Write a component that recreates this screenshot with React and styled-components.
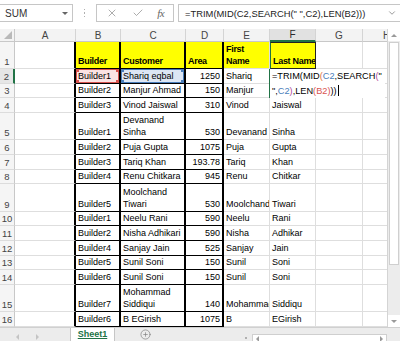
import React from "react";
import styled, { createGlobalStyle } from "styled-components";
import { X, Check, ChevronDown, CirclePlus } from "lucide-react";

const GlobalStyle = createGlobalStyle`
  html, body { margin: 0; padding: 0; background: #fff; }
  body { font-family: "Liberation Sans", Arial, sans-serif; overflow: hidden; }
`;

const SINGLE = 14.6;
const DOUBLE = 27.6;
const GREEN = "#217346";

const DATA = [
  { n: 2, b: "Builder1", c: "Shariq eqbal", d: "1250", e: "Shariq", f: "", edit: true },
  { n: 3, b: "Builder2", c: "Manjur Ahmad", d: "150", e: "Manjur", f: "" },
  { n: 4, b: "Builder3", c: "Vinod Jaiswal", d: "310", e: "Vinod", f: "Jaiswal" },
  { n: 5, b: "Builder1", c: "Devanand Sinha", d: "530", e: "Devanand", f: "Sinha", tall: true },
  { n: 6, b: "Builder2", c: "Puja Gupta", d: "1075", e: "Puja", f: "Gupta" },
  { n: 7, b: "Builder3", c: "Tariq Khan", d: "193.78", e: "Tariq", f: "Khan" },
  { n: 8, b: "Builder4", c: "Renu Chitkara", d: "945", e: "Renu", f: "Chitkar" },
  { n: 9, b: "Builder5", c: "Moolchand Tiwari", d: "530", e: "Moolchand", f: "Tiwari", tall: true },
  { n: 10, b: "Builder1", c: "Neelu Rani", d: "590", e: "Neelu", f: "Rani" },
  { n: 11, b: "Builder2", c: "Nisha Adhikari", d: "590", e: "Nisha", f: "Adhikar" },
  { n: 12, b: "Builder4", c: "Sanjay Jain", d: "525", e: "Sanjay", f: "Jain" },
  { n: 13, b: "Builder5", c: "Sunil Soni", d: "150", e: "Sunil", f: "Soni" },
  { n: 14, b: "Builder6", c: "Sunil Soni", d: "150", e: "Sunil", f: "Soni" },
  { n: 15, b: "Builder7", c: "Mohammad Siddiqui", d: "140", e: "Mohammad", f: "Siddiqu", tall: true },
  { n: 16, b: "Builder6", c: "B EGirish", d: "1075", e: "B", f: "EGirish" },
];

const ROW_SIZES = ["13px", "27px", ...DATA.map((r) => (r.tall ? DOUBLE : SINGLE) + "px")].join(" ");

/* ---------- formula bar ---------- */

const FormulaBar = styled.div`
  height: 29px;
  display: flex;
  align-items: flex-start;
  padding-top: 4px;
  box-sizing: border-box;
  background: #fff;
`;

const NameBox = styled.div`
  width: 73px;
  height: 18px;
  box-sizing: border-box;
  border: 1px solid #c6c6c6;
  border-left: none;
  display: flex;
  align-items: center;
  justify-content: space-between;
  padding: 0 4px 0 5px;
  font-size: 10px;
  color: #333;
`;

const SmallTri = styled.span`
  width: 0;
  height: 0;
  border-left: 3px solid transparent;
  border-right: 3px solid transparent;
  border-top: 3px solid #666;
`;

const Grip = styled.div`
  width: 23px;
  height: 18px;
  display: flex;
  flex-direction: column;
  align-items: center;
  justify-content: center;
  gap: 2px;
  span {
    width: 1.5px;
    height: 1.5px;
    background: #b0b0b0;
  }
`;

const ButtonBox = styled.div`
  width: 78px;
  height: 18px;
  box-sizing: border-box;
  border: 1px solid #c6c6c6;
  display: flex;
  align-items: center;
  justify-content: space-around;
  color: #8a8a8a;
  padding: 0 2px;
`;

const Fx = styled.span`
  font-family: "Liberation Serif", "Times New Roman", serif;
  font-style: italic;
  font-size: 11px;
  color: #666;
  letter-spacing: -0.5px;
`;

const FormulaInput = styled.div`
  flex: 1;
  height: 18px;
  margin-left: 4px;
  box-sizing: border-box;
  border: 1px solid #c6c6c6;
  border-right: none;
  display: flex;
  align-items: center;
  justify-content: space-between;
  padding: 0 3px 0 6px;
  font-size: 9.4px;
  color: #222;
  white-space: nowrap;
`;

/* ---------- sheet ---------- */

const Main = styled.div`
  display: flex;
  height: 298px;
`;

const Grid = styled.div`
  flex: 1;
  min-width: 0;
  overflow: hidden;
  display: grid;
  grid-template-columns: 15px 61px 45px 65px 38px 46px 46px 47px 48px;
  grid-template-rows: ${(p) => p.$rows};
  background: #fff;
`;

const Corner = styled.div`
  background: #f3f3f3;
  border-right: 1px solid #c8c8c8;
  border-bottom: 1px solid #c8c8c8;
  box-sizing: border-box;
  display: flex;
  align-items: flex-end;
  justify-content: flex-end;
  padding: 0 2px 2px 0;
`;

const HeadCell = styled.div`
  box-sizing: border-box;
  display: flex;
  align-items: center;
  justify-content: center;
  background: ${(p) => (p.$active ? "#e1e1e1" : "#f3f3f3")};
  border-right: 1px solid #d4d4d4;
  border-bottom: ${(p) => (p.$active ? `2px solid ${GREEN}` : "1px solid #c8c8c8")};
  font-size: 10px;
  color: ${(p) => (p.$active ? "#2a2a2a" : "#444")};
`;

const RowHead = styled.div`
  box-sizing: border-box;
  display: flex;
  align-items: flex-end;
  justify-content: center;
  padding-bottom: 1px;
  background: ${(p) => (p.$active ? "#e6e6e6" : "#f5f5f5")};
  border-right: ${(p) => (p.$active ? `2px solid ${GREEN}` : "1px solid #c8c8c8")};
  border-bottom: 1px solid #dcdcdc;
  font-size: 9.5px;
  line-height: 11px;
  color: #444;
`;

const Cell = styled.div`
  box-sizing: border-box;
  position: relative;
  z-index: ${(p) => (p.$open ? 5 : "auto")};
  display: flex;
  align-items: flex-end;
  justify-content: ${(p) => (p.$num ? "flex-end" : "flex-start")};
  padding: 0 2px 1px 2px;
  overflow: ${(p) => (p.$open ? "visible" : "hidden")};
  white-space: ${(p) => (p.$wrap ? "normal" : "nowrap")};
  font-size: 9px;
  line-height: 12px;
  color: #000;
  font-weight: ${(p) => (p.$bold ? 700 : 400)};
  letter-spacing: ${(p) => (p.$bold ? "-0.3px" : "normal")};
  background: ${(p) => p.$bg || "#fff"};
  border-right: ${(p) => (p.$edge ? "2px solid #000" : "1px solid #dedede")};
  border-bottom: 1px solid ${(p) => (p.$line ? "#000" : "#dedede")};
  ${(p) => p.$boxed && `border: 1px solid #222; border-left: 1px solid ${GREEN};`}
`;

const RefBox = styled.div`
  position: absolute;
  inset: 0 0 0 0;
  border: 1px solid ${(p) => p.$color};
  pointer-events: none;
`;

const Handle = styled.span`
  position: absolute;
  width: 3px;
  height: 3px;
  background: ${(p) => p.$color};
  ${(p) => (p.$top ? "top: -1px;" : "bottom: -1px;")}
  ${(p) => (p.$left ? "left: -1px;" : "right: -1px;")}
`;

const Editor = styled.div`
  position: absolute;
  top: 0;
  left: -1px;
  width: 116px;
  height: 29px;
  background: #fff;
  border-left: 1.5px solid ${GREEN};
  padding: 0 0 0 2px;
  box-sizing: border-box;
  font-size: 9.2px;
  line-height: 14.6px;
  white-space: pre;
  color: #000;
`;

const Ref = styled.span`
  color: ${(p) => p.$c};
`;

const Caret = styled.span`
  display: inline-block;
  width: 1px;
  height: 11px;
  margin-left: 1px;
  background: #000;
  vertical-align: -2px;
`;

/* ---------- scroll bars / tabs ---------- */

const VScroll = styled.div`
  width: 13px;
  box-sizing: border-box;
  border-left: 1px solid #d4d4d4;
  background: #ececec;
  display: flex;
  flex-direction: column;
`;

const ScrollBtn = styled.div`
  height: 12px;
  background: #fff;
  display: flex;
  align-items: center;
  justify-content: center;
`;

const Thumb = styled.div`
  height: 221px;
  margin: 1px 1px 0 1px;
  background: #fff;
  border: 1px solid #cfcfcf;
`;

const Track = styled.div`
  flex: 1;
`;

const Arrow = styled.span`
  width: 0;
  height: 0;
  ${(p) =>
    p.$dir === "up"
      ? "border-left: 3px solid transparent; border-right: 3px solid transparent; border-bottom: 3px solid #9a9a9a;"
      : p.$dir === "down"
      ? "border-left: 3px solid transparent; border-right: 3px solid transparent; border-top: 3px solid #9a9a9a;"
      : p.$dir === "left"
      ? `border-top: 3px solid transparent; border-bottom: 3px solid transparent; border-right: 3px solid ${p.$c || "#9a9a9a"};`
      : `border-top: 3px solid transparent; border-bottom: 3px solid transparent; border-left: 3px solid ${p.$c || "#9a9a9a"};`}
`;

const TabBar = styled.div`
  height: 14px;
  display: flex;
  align-items: flex-start;
  background: #ececec;
  border-top: 1px solid #d0d0d0;
  box-sizing: border-box;
  overflow: hidden;
`;

const Nav = styled.div`
  width: 70px;
  height: 13px;
  display: flex;
  align-items: center;
  padding: 4px 0 0 16px;
  gap: 17px;
  box-sizing: border-box;
`;

const SheetTab = styled.div`
  width: 45px;
  height: 14px;
  margin-top: -1px;
  background: #fff;
  border-left: 1px solid #c6c6c6;
  border-right: 1px solid #c6c6c6;
  box-sizing: border-box;
  display: flex;
  justify-content: center;
  padding-top: 2px;
  font-size: 9px;
  line-height: 10px;
  font-weight: 700;
  color: ${GREEN};
  text-decoration: underline;
`;

const AddSheet = styled.div`
  width: 60px;
  display: flex;
  justify-content: center;
  padding-top: 1px;
  color: #7a7a7a;
`;

const Spacer = styled.div`
  flex: 1;
`;

const BarGrip = styled(Grip)`
  width: 12px;
  height: 14px;
  justify-content: flex-end;
  padding-bottom: 0;
`;

const HScroll = styled.div`
  width: 135px;
  height: 10px;
  margin-top: 6px;
  background: #fff;
  border: 1px solid #cfcfcf;
  box-sizing: border-box;
  display: flex;
  align-items: center;
  justify-content: space-between;
  padding: 0 3px;
`;

const ScrollCorner = styled.div`
  width: 13px;
`;

const COL_LETTERS = ["A", "B", "C", "D", "E", "F", "G", "H"];

function RefMark({ color }) {
  return (
    <RefBox $color={color}>
      <Handle $color={color} $top $left />
      <Handle $color={color} $top />
      <Handle $color={color} $left />
      <Handle $color={color} />
    </RefBox>
  );
}

function DataRow({ r }) {
  const red = "#d9534f";
  const blue = "#4a7ebb";
  return (
    <>
      <RowHead $active={r.edit}>{r.n}</RowHead>
      <Cell $edge />
      <Cell $edge $line $bg={r.edit ? "#fbe3e3" : undefined}>
        {r.edit && <RefMark color={red} />}
        {r.b}
      </Cell>
      <Cell $edge $line $wrap={r.tall} $bg={r.edit ? "#dce6f4" : undefined}>
        {r.edit && <RefMark color={blue} />}
        {r.c}
      </Cell>
      <Cell $edge $line $num>
        {r.d}
      </Cell>
      <Cell>{r.e}</Cell>
      <Cell $open={r.edit}>
        {r.edit && (
          <Editor>
            {"=TRIM(MID"}
            <Ref $c="#e0703c">(</Ref>
            <Ref $c={blue}>C2</Ref>
            {",SEARCH"}
            <Ref $c="#b04b9c">(</Ref>
            {'"'}
            {"\n"}
            {'",'}
            <Ref $c={blue}>C2</Ref>
            <Ref $c="#b04b9c">)</Ref>
            {",LEN"}
            <Ref $c={red}>(B2)</Ref>
            {"))"}
            <Caret />
          </Editor>
        )}
        {r.f}
      </Cell>
      <Cell />
      <Cell />
    </>
  );
}

export default function App() {
  return (
    <>
      <GlobalStyle />
      <FormulaBar>
        <NameBox>
          SUM
          <SmallTri />
        </NameBox>
        <Grip>
          <span />
          <span />
          <span />
        </Grip>
        <ButtonBox>
          <X size={12} strokeWidth={1.4} />
          <Check size={12} strokeWidth={1.4} />
          <Fx>fx</Fx>
        </ButtonBox>
        <FormulaInput>
          {'=TRIM(MID(C2,SEARCH(" ",C2),LEN(B2)))'}
          <ChevronDown size={10} strokeWidth={1.6} color="#666" />
        </FormulaInput>
      </FormulaBar>

      <Main>
        <Grid $rows={ROW_SIZES}>
          <Corner>
            <svg width="8" height="8" viewBox="0 0 8 8">
              <polygon points="8,0 8,8 0,8" fill="#b9b9b9" />
            </svg>
          </Corner>
          {COL_LETTERS.map((l) => (
            <HeadCell key={l} $active={l === "F"}>
              {l}
            </HeadCell>
          ))}

          <RowHead>1</RowHead>
          <Cell $edge />
          <Cell $edge $line $bold $bg="#ffff00">Builder</Cell>
          <Cell $edge $line $bold $bg="#ffff00">Customer</Cell>
          <Cell $edge $line $bold $bg="#ffff00">Area</Cell>
          <Cell $bold $wrap $bg="#ffff00">First Name</Cell>
          <Cell $bold $boxed $bg="#ffff00">Last Name</Cell>
          <Cell />
          <Cell />

          {DATA.map((r) => (
            <DataRow key={r.n} r={r} />
          ))}
        </Grid>
        <VScroll>
          <ScrollBtn>
            <Arrow $dir="up" />
          </ScrollBtn>
          <Thumb />
          <Track />
          <ScrollBtn>
            <Arrow $dir="down" />
          </ScrollBtn>
        </VScroll>
      </Main>

      <TabBar>
        <Nav>
          <Arrow $dir="left" $c="#c4c4c4" />
          <Arrow $dir="right" $c="#c4c4c4" />
        </Nav>
        <SheetTab>Sheet1</SheetTab>
        <AddSheet>
          <CirclePlus size={11} strokeWidth={1.4} />
        </AddSheet>
        <Spacer />
        <BarGrip>
          <span />
          <span />
        </BarGrip>
        <HScroll>
          <Arrow $dir="left" />
          <Arrow $dir="right" />
        </HScroll>
        <ScrollCorner />
      </TabBar>
    </>
  );
}
